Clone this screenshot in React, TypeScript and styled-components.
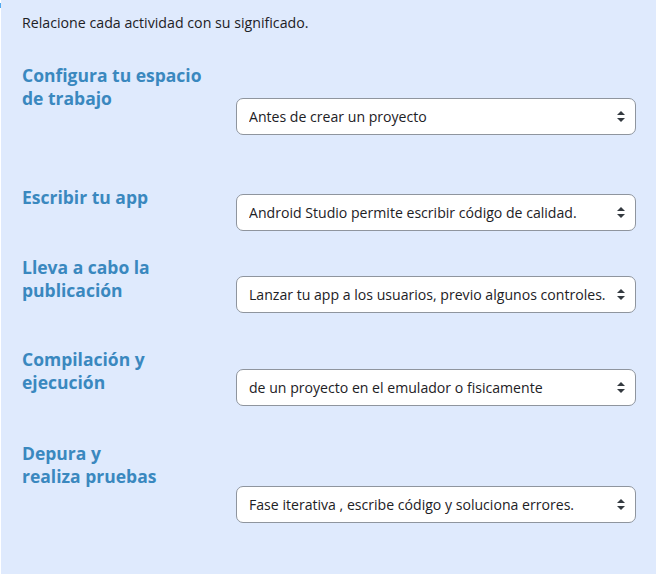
import React from "react";
import styled, { createGlobalStyle } from "styled-components";

const Global = createGlobalStyle`
  html, body { margin: 0; padding: 0; background: #ffffff; }
  body { font-family: "Open Sans", "Noto Sans", Arial, sans-serif; }
`;

const Page = styled.div`
  display: flex;
  width: 662px;
  height: 574px;
  background: #ffffff;
`;

const Edge = styled.div`
  width: 1px;
  display: flex;
  flex-direction: column;
`;

const EdgeMark = styled.div`
  margin-top: 3px;
  height: 5px;
  background: #52a9f0;
`;

const Panel = styled.div`
  width: 655px;
  height: 574px;
  background: #dfeafd;
  box-sizing: border-box;
  padding: 0 0 0 21px;
`;

const Prompt = styled.div`
  margin-top: 13px;
  font-size: 14.2px;
  line-height: 20px;
  color: #1d2125;
`;

const Row = styled.div<{ $top: number }>`
  display: flex;
  align-items: flex-start;
  margin-top: ${(p) => p.$top}px;
`;

const Label = styled.div`
  width: 214px;
  font-size: 17.5px;
  font-weight: 700;
  line-height: 23px;
  color: #3a88bf;
`;

const SelectWrap = styled.div<{ $offset: number }>`
  position: relative;
  margin-top: ${(p) => p.$offset}px;
  width: 400px;
  height: 37px;
`;

const Select = styled.select`
  appearance: none;
  -webkit-appearance: none;
  width: 400px;
  height: 37px;
  box-sizing: border-box;
  border: 1px solid #8f959e;
  border-radius: 7px;
  background: #ffffff;
  padding: 0 20px 0 12px;
  font-family: "Open Sans", "Noto Sans", Arial, sans-serif;
  font-size: 14.1px;
  color: #1d2125;
  outline: none;
`;

const Arrow = styled.svg`
  position: absolute;
  right: 11px;
  top: 13px;
  pointer-events: none;
`;

const rows = [
  {
    label: ["Configura tu espacio", "de trabajo"],
    value: "Antes de crear un proyecto",
    top: 31,
    offset: 34,
  },
  {
    label: ["Escribir tu app"],
    value: "Android Studio permite escribir código de calidad.",
    top: 51,
    offset: 8,
  },
  {
    label: ["Lleva a cabo la", "publicación"],
    value: "Lanzar tu app a los usuarios, previo algunos controles.",
    top: 25,
    offset: 20,
  },
  {
    label: ["Compilación y", "ejecución"],
    value: "de un proyecto en el emulador o fisicamente",
    top: 35,
    offset: 21,
  },
  {
    label: ["Depura y", "realiza pruebas"],
    value: "Fase iterativa , escribe código y soluciona errores.",
    top: 36,
    offset: 44,
  },
];

export default function App() {
  return (
    <>
      <Global />
      <Page>
        <Edge>
          <EdgeMark />
        </Edge>
        <Panel>
          <Prompt>Relacione cada actividad con su significado.</Prompt>
          {rows.map((r, i) => (
            <Row key={i} $top={r.top}>
              <Label>
                {r.label.map((l, j) => (
                  <div key={j}>{l}</div>
                ))}
              </Label>
              <SelectWrap $offset={r.offset}>
                <Select defaultValue={r.value}>
                  <option value={r.value}>{r.value}</option>
                </Select>
                <Arrow width="8" height="11" viewBox="0 0 8 11">
                  <path d="M4 0 L8 4 L0 4 Z" fill="#343a40" />
                  <path d="M0 7 L8 7 L4 11 Z" fill="#343a40" />
                </Arrow>
              </SelectWrap>
            </Row>
          ))}
        </Panel>
      </Page>
    </>
  );
}
